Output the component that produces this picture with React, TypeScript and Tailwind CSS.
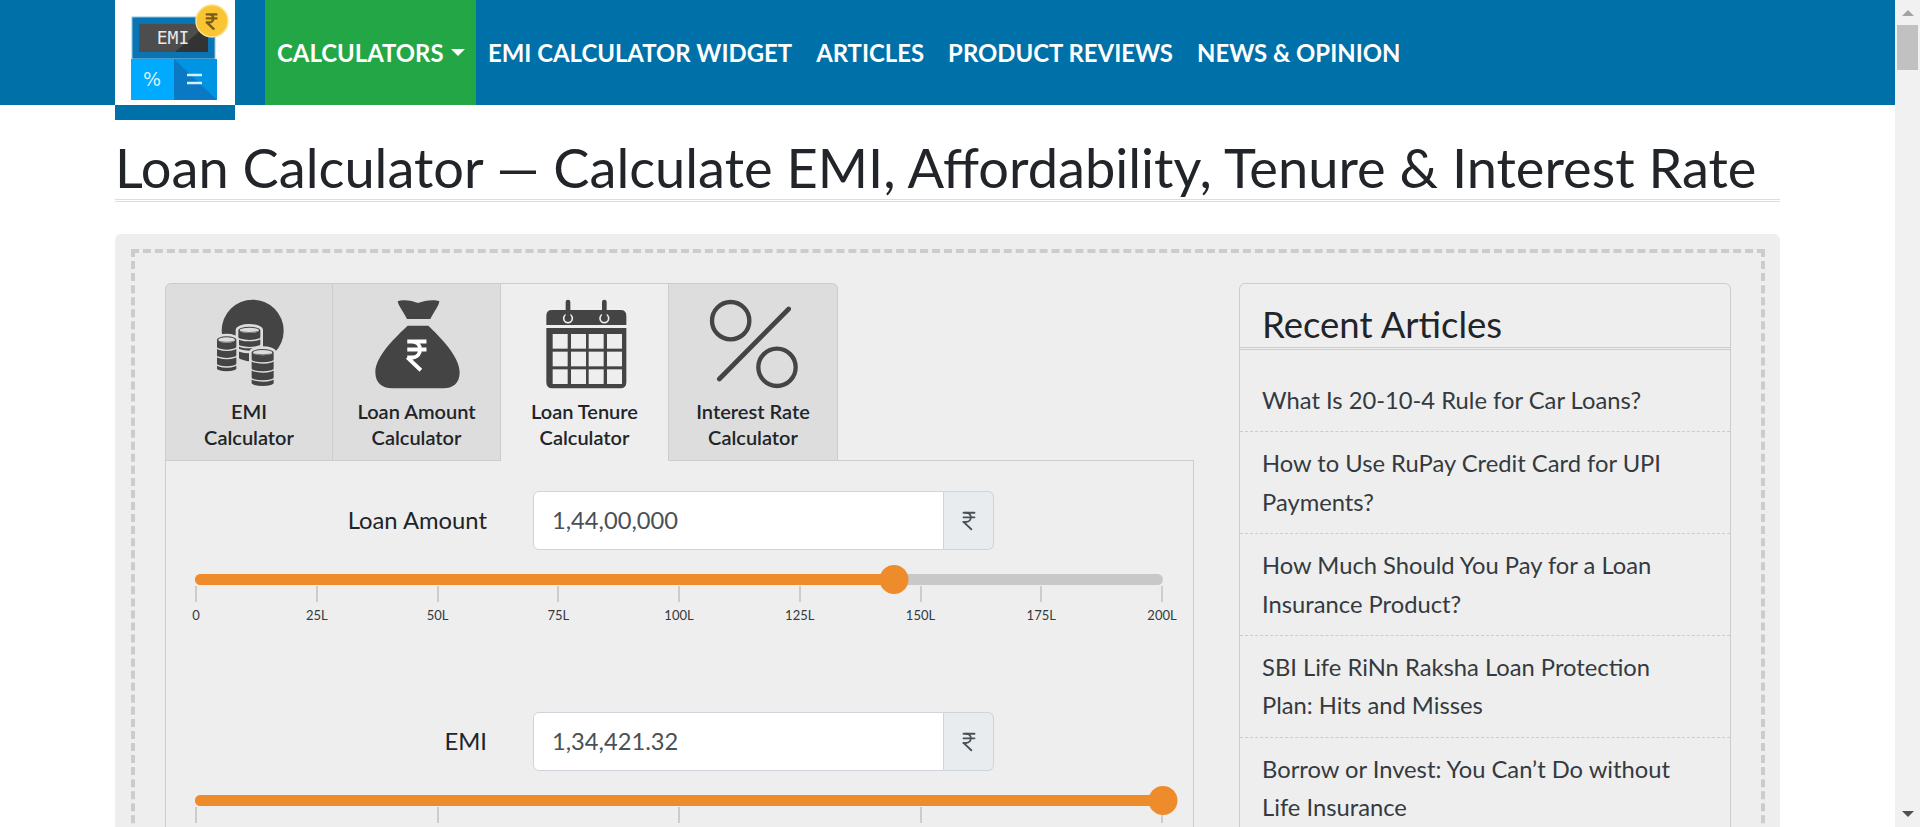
import React from 'react';
import { IndianRupee } from 'lucide-react';

const navItems = ['EMI CALCULATOR WIDGET', 'ARTICLES', 'PRODUCT REVIEWS', 'NEWS & OPINION'];

const articles = [
  'What Is 20-10-4 Rule for Car Loans?',
  'How to Use RuPay Credit Card for UPI Payments?',
  'How Much Should You Pay for a Loan Insurance Product?',
  'SBI Life RiNn Raksha Loan Protection Plan: Hits and Misses',
  'Borrow or Invest: You Can’t Do without Life Insurance',
];

const Logo = () => (
  <svg width="120" height="105" viewBox="0 0 120 105">
    <rect x="17" y="17" width="83" height="42" fill="#0a75b5" stroke="#8cc4e6" strokeWidth="1" />
    <rect x="24" y="24" width="69" height="28" fill="#4d4d4d" />
    <path d="M60 52 L93 24 V52 Z" fill="#333333" />
    <text x="58" y="44" textAnchor="middle" fontFamily="'DejaVu Sans Mono', monospace" fontSize="18" fill="#e8e8e8">EMI</text>
    <rect x="16" y="59" width="43" height="41" fill="#00aaff" />
    <rect x="59" y="59" width="43" height="41" fill="#0095e3" />
    <path d="M59 59 L102 100 H59 Z" fill="#0a78c2" />
    <text x="37" y="86" textAnchor="middle" fontFamily="'DejaVu Sans', sans-serif" fontSize="19" fill="#d5efff">%</text>
    <path d="M72 75 H87 M72 83 H87" stroke="#d5efff" strokeWidth="2.5" />
    <circle cx="97" cy="21" r="16" fill="#f9c534" stroke="#fde28a" strokeWidth="1.5" />
    <g transform="translate(87 12) scale(0.8)" fill="none" stroke="#7a5a18" strokeWidth="3" strokeLinecap="round" strokeLinejoin="round">
      <path d="M6 3h12M6 8h12M6 13l8.5 8M6 13h3M9 13c6.667 0 6.667-10 0-10" />
    </g>
  </svg>
);

const CoinStack = ({ cx, top, rx, rows, step }: { cx: number; top: number; rx: number; rows: number; step: number }) => {
  const bottom = top + rows * step + 12;
  return (
    <g>
      <path
        d={`M${cx - rx} ${top} A${rx} 14 0 0 1 ${cx + rx} ${top} V${bottom} A${rx} 12 0 0 1 ${cx - rx} ${bottom} Z`}
        fill="#444444"
        stroke="#dddddd"
        strokeWidth="8"
      />
      <ellipse cx={cx} cy={top + 1} rx={rx - 8} ry={8} fill="#dddddd" />
      <ellipse cx={cx} cy={top + 4} rx={rx - 12} ry={5} fill="#777777" />
      <ellipse cx={cx} cy={top + 1} rx={rx - 12} ry={5} fill="#dddddd" />
      {Array.from({ length: rows }).map((_, i) => (
        <path
          key={i}
          d={`M${cx - rx} ${top + 20 + i * step} A${rx} 12 0 0 0 ${cx + rx} ${top + 20 + i * step}`}
          fill="none"
          stroke="#dddddd"
          strokeWidth="4"
        />
      ))}
    </g>
  );
};

const CoinsIcon = () => (
  <svg width="100" height="92" viewBox="147 85 300 276" className="block">
    <circle cx="308" cy="180" r="93" fill="#444444" />
    <CoinStack cx={298} top={178} rx={37} rows={2} step={21} />
    <CoinStack cx={230} top={207} rx={33} rows={3} step={25} />
    <CoinStack cx={338} top={245} rx={37} rows={3} step={27} />
  </svg>
);

const BagIcon = () => (
  <svg width="100" height="92" viewBox="650 85 300 276" className="block">
    <path d="M742 92 C760 85 785 90 803 97 C822 90 850 85 867 92 C866 105 850 125 840 145 H770 C760 125 744 105 742 92 Z" fill="#444444" />
    <path d="M772 165 H834 C865 195 928 255 928 305 C928 340 905 353 880 353 H725 C700 353 675 340 675 305 C675 255 740 195 772 165 Z" fill="#444444" />
    <g transform="translate(742 198) scale(4.8)" fill="none" stroke="#ffffff" strokeWidth="2.4" strokeLinecap="butt" strokeLinejoin="miter">
      <path d="M6 3h12M6 8h12M6 13l8.5 8M6 13h3M9 13c6.667 0 6.667-10 0-10" />
    </g>
  </svg>
);

const CalendarIcon = () => (
  <svg width="100" height="92" viewBox="164 85 300 276" className="block">
    <path d="M198 163 V135 Q198 118 215 118 H421 Q438 118 438 135 V163 Z" fill="#444444" />
    <path d="M198 172 H438 V335 Q438 353 420 353 H216 Q198 353 198 335 Z" fill="#444444" />
    {[263, 372].map((x) => (
      <g key={x}>
        <circle cx={x} cy="143" r="13" fill="none" stroke="#eeeeee" strokeWidth="5" />
        <path d={`M${x} 94 V146`} stroke="#444444" strokeWidth="14" strokeLinecap="round" />
      </g>
    ))}
    {[190, 243, 296].map((y) =>
      [217, 272, 325, 380].map((x) => <rect key={`${x}-${y}`} x={x} y={y} width="45" height="44" fill="#eeeeee" />),
    )}
  </svg>
);

const PercentIcon = () => (
  <svg width="100" height="92" viewBox="668 85 300 276" className="block">
    <circle cx="751" cy="150" r="56" fill="none" stroke="#444444" strokeWidth="13" />
    <circle cx="890" cy="290" r="56" fill="none" stroke="#444444" strokeWidth="13" />
    <path d="M925 115 L717 325" stroke="#444444" strokeWidth="14" strokeLinecap="round" />
  </svg>
);

const tabs = [
  { first: 'EMI', second: 'Calculator', icon: <CoinsIcon /> },
  { first: 'Loan Amount', second: 'Calculator', icon: <BagIcon /> },
  { first: 'Loan Tenure', second: 'Calculator', icon: <CalendarIcon />, active: true },
  { first: 'Interest Rate', second: 'Calculator', icon: <PercentIcon /> },
];

const Slider = ({ percent, ticks }: { percent: number; ticks: string[] }) => (
  <div className="ml-[29px] w-[968px]">
    <div className="relative h-[11px] rounded-full bg-[#c8c8c8]">
      <div className="h-full rounded-l-full bg-[#ee8c2b]" style={{ width: `${percent}%` }} />
      <div
        className="absolute top-[-9px] h-[29px] w-[29px] -translate-x-1/2 rounded-full bg-[#ee8c2b]"
        style={{ left: `${percent}%` }}
      />
    </div>
    <div className="flex justify-between px-px pt-px">
      {ticks.map((t, i) => (
        <div key={i} className="flex w-0 flex-col items-center">
          <div className="h-4 w-0.5 shrink-0 bg-[#cccccc]" />
          <span className="mt-[3px] text-[13px] leading-5 whitespace-nowrap text-[#343a40]">{t}</span>
        </div>
      ))}
    </div>
  </div>
);

const InputRow = ({ label, value }: { label: string; value: string }) => (
  <div className="flex items-center">
    <label className="w-[321px] text-right text-[23.8px] text-[#212529]">{label}</label>
    <div className="ml-[46px] flex h-[59px] w-[461px]">
      <div className="flex flex-1 items-center rounded-l-[6px] border border-[#ced4da] bg-white pl-[18px] text-[23.7px] text-[#495057]">
        {value}
      </div>
      <div className="flex w-[50px] items-center justify-center rounded-r-[6px] border border-l-0 border-[#ced4da] bg-[#e9ecef] text-[#495057]">
        <IndianRupee size={22} strokeWidth={2} />
      </div>
    </div>
  </div>
);

const Scrollbar = () => (
  <div className="flex h-full w-[25px] shrink-0 flex-col items-center bg-[#f1f1f1]">
    <div className="mt-[10px] h-0 w-0 border-x-[6px] border-b-[6px] border-x-transparent border-b-[#a3a3a3]" />
    <div className="mt-[9px] h-[45px] w-[21px] bg-[#c1c1c1]" />
    <div className="mt-auto mb-[10px] h-0 w-0 border-x-[6px] border-t-[6px] border-x-transparent border-t-[#505050]" />
  </div>
);

export default function App() {
  return (
    <div className="flex h-[827px] overflow-hidden bg-white font-['Lato',sans-serif] text-[#212529]">
      <div className="w-[1895px] shrink-0 overflow-hidden">
        <header className="h-[105px] bg-[#0070a8]">
          <div className="mx-auto flex w-[1665px]">
            <div className="relative z-10 h-[120px] w-[120px] shrink-0 border-b-[15px] border-[#0070a8] bg-white">
              <Logo />
            </div>
            <nav className="ml-[30px] flex h-[105px] items-center text-[23.9px] font-bold text-white">
              <div className="flex h-full w-[211px] items-center bg-[#23a746] pl-3">
                CALCULATORS
                <span className="ml-[7px] h-0 w-0 border-x-[7px] border-t-[7px] border-x-transparent border-t-white" />
              </div>
              {navItems.map((item) => (
                <a key={item} className="px-3 whitespace-nowrap">
                  {item}
                </a>
              ))}
            </nav>
          </div>
        </header>

        <main className="mx-auto w-[1665px]">
          <h1 className="mt-[33px] border-b-[3px] border-double border-[#dddddd] pb-[1px] text-[54.2px] leading-[60px] font-normal whitespace-nowrap">
            Loan Calculator — Calculate EMI, Affordability, Tenure &amp; Interest Rate
          </h1>

          <section className="mt-[32px] rounded-[6px] bg-[#eeeeee] pt-[15px] pr-[15px] pl-4">
            <div className="flex justify-between border-4 border-dashed border-[#cccccc] pt-[30px] pr-[30px] pl-[30px] pb-10">
              <div className="w-[1029px]">
                <div className="relative z-10 -mb-px flex pr-0">
                  {tabs.map((tab, i) => (
                    <div
                      key={tab.first}
                      className={`flex h-[178px] flex-col items-center border-t border-r border-b border-[#cccccc] pt-[15px] text-center text-[20px] leading-[25.6px] font-semibold text-[#212529] ${
                        i === 0 ? 'rounded-tl-[6px] border-l' : ''
                      } ${i === 3 ? 'w-[169px] rounded-tr-[6px]' : 'w-[168px]'} ${tab.active ? 'border-b-[#eeeeee] bg-[#eeeeee]' : 'bg-[#dddddd]'}`}
                    >
                      {tab.icon}
                      <div className="mt-[8px]">{tab.first}</div>
                      <div>{tab.second}</div>
                    </div>
                  ))}
                </div>
                <div className="h-[500px] border border-[#cccccc] pt-[30px]">
                  <InputRow label="Loan Amount" value="1,44,00,000" />
                  <div className="mt-[24px]">
                    <Slider percent={72.2} ticks={['0', '25L', '50L', '75L', '100L', '125L', '150L', '175L', '200L']} />
                  </div>
                  <div className="mt-[87px]">
                    <InputRow label="EMI" value="1,34,421.32" />
                  </div>
                  <div className="mt-[24px]">
                    <Slider percent={100} ticks={['', '', '', '', '']} />
                  </div>
                </div>
              </div>

              <aside className="h-[600px] w-[492px] rounded-[6px] border border-[#cccccc]">
                <h2 className="h-[66px] border-b-[3px] border-double border-[#cccccc] px-[22px] pt-4 text-[36.5px] leading-[48px]">
                  Recent Articles
                </h2>
                <ul className="pt-[19px] text-[23.75px] leading-[38.4px] text-[#343a40]">
                  {articles.map((a) => (
                    <li key={a} className="border-b border-dashed border-[#cccccc] py-3 pr-[28px] pl-[22px]">
                      {a}
                    </li>
                  ))}
                </ul>
              </aside>
            </div>
          </section>
        </main>
      </div>
      <Scrollbar />
    </div>
  );
}
